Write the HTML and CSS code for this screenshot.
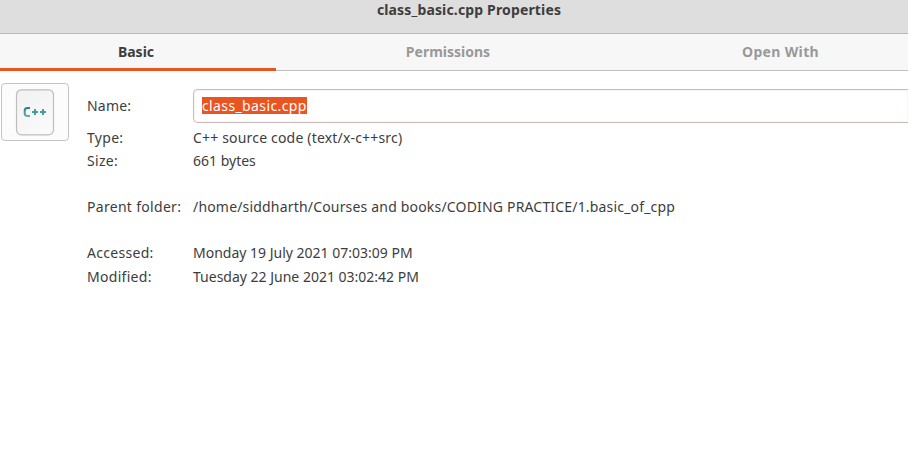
FILE: index.html
```html
<!DOCTYPE html>
<html lang="en">
<head>
<meta charset="utf-8">
<title>class_basic.cpp Properties</title>
<link rel="stylesheet" href="styles.css">
</head>
<body>
<header class="titlebar"><h1 class="title">class_basic.cpp Properties</h1></header>
<nav class="tabs">
  <div class="tab active">Basic</div>
  <div class="tab">Permissions</div>
  <div class="tab open-with">Open With</div>
</nav>
<main class="panel">
  <div class="icon-button">
    <svg class="file-icon" width="40" height="48" viewBox="0 0 40 48">
      <defs>
        <linearGradient id="paper" x1="0" y1="0" x2="0.6" y2="1"><stop offset="0" stop-color="#f1f1f1"/><stop offset="1" stop-color="#fafafa"/></linearGradient>
        <linearGradient id="ink" x1="0" y1="0" x2="0" y2="1"><stop offset="0" stop-color="#258391"/><stop offset="1" stop-color="#62adb0"/></linearGradient>
      </defs>
      <rect x="1.5" y="1.8" width="37" height="45" rx="5" fill="url(#paper)" stroke="#bdbdbd" stroke-width="1.2"/>
      <path d="M15 20H12.5Q9.7 20 9.7 22.7V25.2Q9.7 28 12.5 28H15" fill="none" stroke="url(#ink)" stroke-width="2"/>
      <path d="M17 23h6v2h-6zM19 21h2v6h-2zM25 23h6v2h-6zM27 21h2v6h-2z" fill="#469ca3"/>
    </svg>
  </div>
  <dl class="properties">
    <dt class="name">Name:</dt><dd class="entry"><span class="selection">class_basic.cpp</span></dd>
    <dt>Type:</dt><dd class="wide">C++ source code (text/x-c++src)</dd>
    <dt>Size:</dt><dd>661 bytes</dd>
    <dt>Parent folder:</dt><dd class="wide">/home/siddharth/Courses and books/CODING PRACTICE/1.basic_of_cpp</dd>
    <dt>Accessed:</dt><dd>Monday 19 July 2021 07:03:09 PM</dd>
    <dt>Modified:</dt><dd>Tuesday 22 June 2021 03:02:42 PM</dd>
  </dl>
</main>
</body>
</html>
```
FILE: styles.css
```css
* { box-sizing: border-box; }
body { margin: 0; overflow: hidden; background: #fff; color: #3d3d3d; font: 14px/20px "Noto Sans", sans-serif; }
.titlebar { height: 34px; background: #dedede; border-bottom: 1px solid #b8b8b8; padding-left: 30px; }
.title { margin: 0; font-size: 14px; line-height: 20px; font-weight: 700; text-align: center; letter-spacing: 0.15px; }
.tabs { display: grid; grid-template-columns: 276px 344px 321px; height: 37px; background: #f7f7f7; border-bottom: 1px solid #bfbfbf; font-weight: 700; color: #999; }
.tab { height: 37px; text-align: center; line-height: 36px; }
.active { color: #3d3d3d; border-bottom: 3px solid #e95420; padding-right: 4px; }
.open-with { letter-spacing: 0.35px; }
.panel { display: flex; padding: 12px 0 0 1px; }
.icon-button { width: 68px; height: 58px; border: 1px solid #c4c4c4; border-radius: 4px; background: #fcfcfc; padding: 4px 13px; }
.file-icon { display: block; }
.properties { flex: 1; margin: 6px 0 0 18px; display: grid; grid-template-columns: 106px 1fr; grid-template-rows: 39px 23px 46px 46px 24px 20px; align-content: start; }
dt, dd { margin: 0; white-space: nowrap; }
dt { letter-spacing: 0.3px; }
.name { padding-top: 7px; letter-spacing: 0.2px; }
.wide { letter-spacing: 0.18px; }
.entry { height: 34px; padding: 6px 0 0 8px; border: 1px solid #cdb9b5; border-right: 0; border-radius: 5px 0 0 5px; box-shadow: inset 0 0 0 1px #fdf5f3; letter-spacing: 0.38px; }
.selection { display: inline-block; height: 17px; line-height: 18px; vertical-align: top; margin-top: 1px; background: #e95420; color: #fff; }
```
